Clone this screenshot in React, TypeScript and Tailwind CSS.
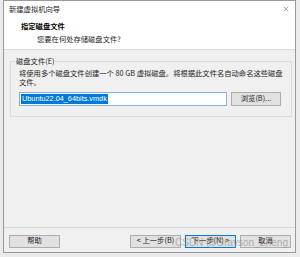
import { X } from 'lucide-react';

const font = { fontFamily: '"Noto Sans CJK SC", "Liberation Sans", sans-serif' };

function Btn({ label, primary }: { label: string; primary?: boolean }) {
  return (
    <button
      className={
        'h-[13px] w-[51px] flex items-center justify-center text-[7.3px] leading-none text-[#1a1a1a] bg-[#e1e1e1] border ' +
        (primary ? 'border-[#0078d7]' : 'border-[#adadad]')
      }
    >
      {label}
    </button>
  );
}

export default function App() {
  return (
    <div className="w-[300px] h-[257px] bg-[#ebebeb] pl-[3px] relative overflow-hidden" style={font}>
      <div className="w-[293px] h-[253px] border border-[#9a9a9a] bg-white flex flex-col">
        {/* title bar */}
        <div className="h-[16px] flex items-center justify-between pl-[5px] pr-[5px] bg-white">
          <span className="text-[7.3px] text-[#222]">新建虚拟机向导</span>
          <X className="w-[8px] h-[8px] text-[#333]" strokeWidth={1.25} />
        </div>

        {/* header */}
        <div className="h-[33px] border-b border-[#dadada] pl-[17px] pt-[4px] flex flex-col">
          <span className="text-[7.3px] font-bold text-black leading-[10px]">指定磁盘文件</span>
          <span className="text-[7.3px] text-[#222] leading-[10px] pl-[16px] mt-[3px]">
            您要在何处存储磁盘文件?
          </span>
        </div>

        {/* body */}
        <div className="flex-1 bg-[#f0f0f0] border-b border-[#dadada] pl-[6px] pr-[5px] pt-[6px]">
          <fieldset className="border border-[#dcdcdc] h-[61px] pl-[8px] pr-[6px]">
            <legend className="text-[7.3px] text-[#222] px-[1px] ml-[-4px] leading-[10px]">磁盘文件(E)</legend>
            <p className="text-[7.3px] text-[#222] leading-[8.5px] mt-[3px] w-[266px]">
              将使用多个磁盘文件创建一个 80 GB 虚拟磁盘。将根据此文件名自动命名这些磁盘文件。
            </p>
            <div className="flex items-center gap-[4px] mt-[6px]">
              <div className="w-[208px] h-[14px] bg-white border border-[#7eb4ea] flex items-center pl-[1px]">
                <span
                  className="bg-[#0078d7] text-white text-[7.3px] leading-[10px] px-[1px]"
                  style={{ fontFamily: '"Liberation Sans", sans-serif' }}
                >
                  Ubuntu22.04_64bits.vmdk
                </span>
              </div>
              <button className="w-[50px] h-[14px] bg-[#e1e1e1] border border-[#adadad] text-[7.3px] leading-none text-[#222]">
                浏览(B)...
              </button>
            </div>
          </fieldset>
        </div>

        {/* footer */}
        <div className="h-[24px] bg-[#f0f0f0] flex items-center pl-[5px] pr-[4px] pt-[2px]">
          <Btn label="帮助" />
          <div className="flex-1" />
          <div className="flex items-center gap-[4px]">
            <Btn label="< 上一步(B)" />
            <Btn label="下一步(N) >" primary />
            <Btn label="取消" />
          </div>
        </div>
      </div>

      {/* watermark */}
      <span
        className="absolute left-[175px] top-[238px] whitespace-nowrap text-[10px] text-[#8a8a8a]/60 leading-none pointer-events-none"
        style={{ fontFamily: '"Liberation Sans", sans-serif' }}
      >
        CSDN @Grayson_Zheng
      </span>
    </div>
  );
}
